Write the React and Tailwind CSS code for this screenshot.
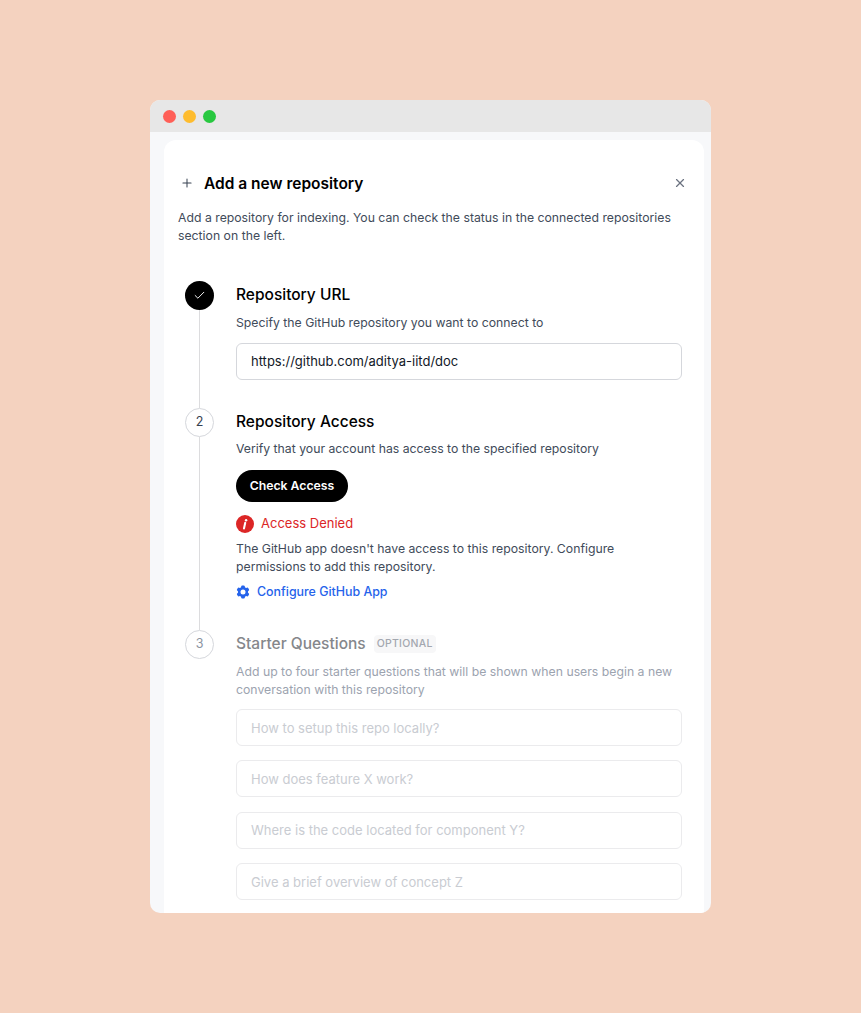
import { Check, Plus, X } from 'lucide-react';
import { HiCog6Tooth } from 'react-icons/hi2';

const questions = [
  'How to setup this repo locally?',
  'How does feature X work?',
  'Where is the code located for component Y?',
  'Give a brief overview of concept Z',
];

const AlertIcon = () => (
  <svg width="18" height="18" viewBox="0 0 18 18" xmlns="http://www.w3.org/2000/svg">
    <circle cx="9" cy="9" r="9" fill="#dc2626" />
    <circle cx="10.1" cy="5.2" r="1.2" fill="#fff" />
    <path d="M9.2 7.9 8 13.4" stroke="#fff" strokeWidth="2.1" strokeLinecap="round" />
  </svg>
);

function Step({ marker, last, children, className = '' }) {
  return (
    <div className="flex">
      <div className="flex w-[29px] shrink-0 flex-col items-center">
        {marker}
        {!last && <div className="w-px flex-1 bg-[#dcdcde]" />}
      </div>
      <div className={`ml-[22px] min-w-0 flex-1 ${className}`}>{children}</div>
    </div>
  );
}

function NumberMarker({ n, muted }) {
  return (
    <div
      className={`flex h-[29px] w-[29px] items-center justify-center rounded-full border border-[#d5d7dc] bg-white text-[12.5px] ${
        muted ? 'text-[#8b93a1]' : 'text-[#374151]'
      }`}
    >
      {n}
    </div>
  );
}

export default function App() {
  return (
    <div
      className="flex min-h-screen justify-center bg-[#f4d2bf] pt-[100px]"
      style={{ fontFamily: 'Inter, "Noto Sans", sans-serif' }}
    >
      <div className="flex h-[813px] w-[561px] flex-col overflow-hidden rounded-[10px] bg-[#f7f8fa]">
        <div className="flex h-8 shrink-0 items-center gap-[7px] bg-[#e7e7e7] px-[13px]">
          <span className="h-[13px] w-[13px] rounded-full bg-[#ff5f57]" />
          <span className="h-[13px] w-[13px] rounded-full bg-[#febc2e]" />
          <span className="h-[13px] w-[13px] rounded-full bg-[#28c840]" />
        </div>

        <div className="ml-[14px] mr-[7px] mt-2 flex-1 overflow-hidden rounded-t-xl bg-white pl-[14px] pr-[22px] pt-[32px]">
          <div className="flex h-[22px] items-center">
            <Plus size={14} strokeWidth={1.75} className="ml-[2px] text-[#374151]" />
            <h1 className="ml-[10px] flex-1 pt-[2px] text-[15.5px] font-semibold leading-[22px] text-black">
              Add a new repository
            </h1>
            <X size={14} strokeWidth={2} className="mr-[-5px] text-[#6b7280]" />
          </div>
          <p className="mt-[15px] text-[12.25px] leading-[18px] text-[#414b5a]">
            Add a repository for indexing. You can check the status in the connected repositories section on the left.
          </p>

          <div className="ml-[7px] mt-[36px]">
            <Step
              marker={
                <div className="flex h-[29px] w-[29px] items-center justify-center rounded-full bg-black">
                  <Check size={13} strokeWidth={1.75} className="text-white" />
                </div>
              }
              className="pb-[28px]"
            >
              <h2 className="text-[15.5px] font-medium leading-[28px] text-black">Repository URL</h2>
              <p className="mt-[5px] text-[12.25px] leading-[18px] text-[#414b5a]">
                Specify the GitHub repository you want to connect to
              </p>
              <div className="mt-[11px] flex h-[37px] items-center rounded-md border border-[#d5d7dc] px-[14px] text-[13px] text-[#111827]">
                https://github.com/aditya-iitd/doc
              </div>
            </Step>

            <Step marker={<NumberMarker n={2} />} className="pb-[29px]">
              <h2 className="text-[15.5px] font-medium leading-[28px] text-black">Repository Access</h2>
              <p className="mt-[4px] text-[12.25px] leading-[18px] text-[#414b5a]">
                Verify that your account has access to the specified repository
              </p>
              <button className="mt-[12px] block h-8 w-[112px] rounded-full bg-black text-[12.25px] font-semibold text-white">
                Check Access
              </button>
              <div className="mt-[13px] flex h-[18px] items-center gap-[7px] text-[13px] text-[#dc2626]">
                <AlertIcon />
                Access Denied
              </div>
              <p className="mt-[7px] text-[12.25px] leading-[18px] text-[#414b5a]">
                The GitHub app doesn't have access to this repository. Configure permissions to add this repository.
              </p>
              <div className="mt-[7px] flex h-[18px] items-center gap-[6px] text-[12.4px] font-medium text-[#2563eb]">
                <HiCog6Tooth size={16} className="-ml-px" />
                Configure GitHub App
              </div>
            </Step>

            <Step marker={<NumberMarker n={3} muted />} last>
              <div className="flex h-[28px] items-center">
                <h2 className="text-[15.5px] font-medium text-[#85878b]">Starter Questions</h2>
                <span className="ml-2 flex h-[18px] items-center rounded bg-[#f7f7f8] px-[3px] text-[10.5px] font-medium tracking-wide text-[#a3a7af]">
                  OPTIONAL
                </span>
              </div>
              <p className="mt-[5px] text-[12.25px] leading-[18px] text-[#9ca3af]">
                Add up to four starter questions that will be shown when users begin a new conversation with this repository
              </p>
              <div className="mt-[10px] flex flex-col gap-[14.3px]">
                {questions.map((q) => (
                  <div
                    key={q}
                    className="flex h-[37px] items-center rounded-md border border-[#ebebed] px-[14px] pt-[2px] text-[13px] text-[#c9ccd2]"
                  >
                    {q}
                  </div>
                ))}
              </div>
            </Step>
          </div>
        </div>
      </div>
    </div>
  );
}
